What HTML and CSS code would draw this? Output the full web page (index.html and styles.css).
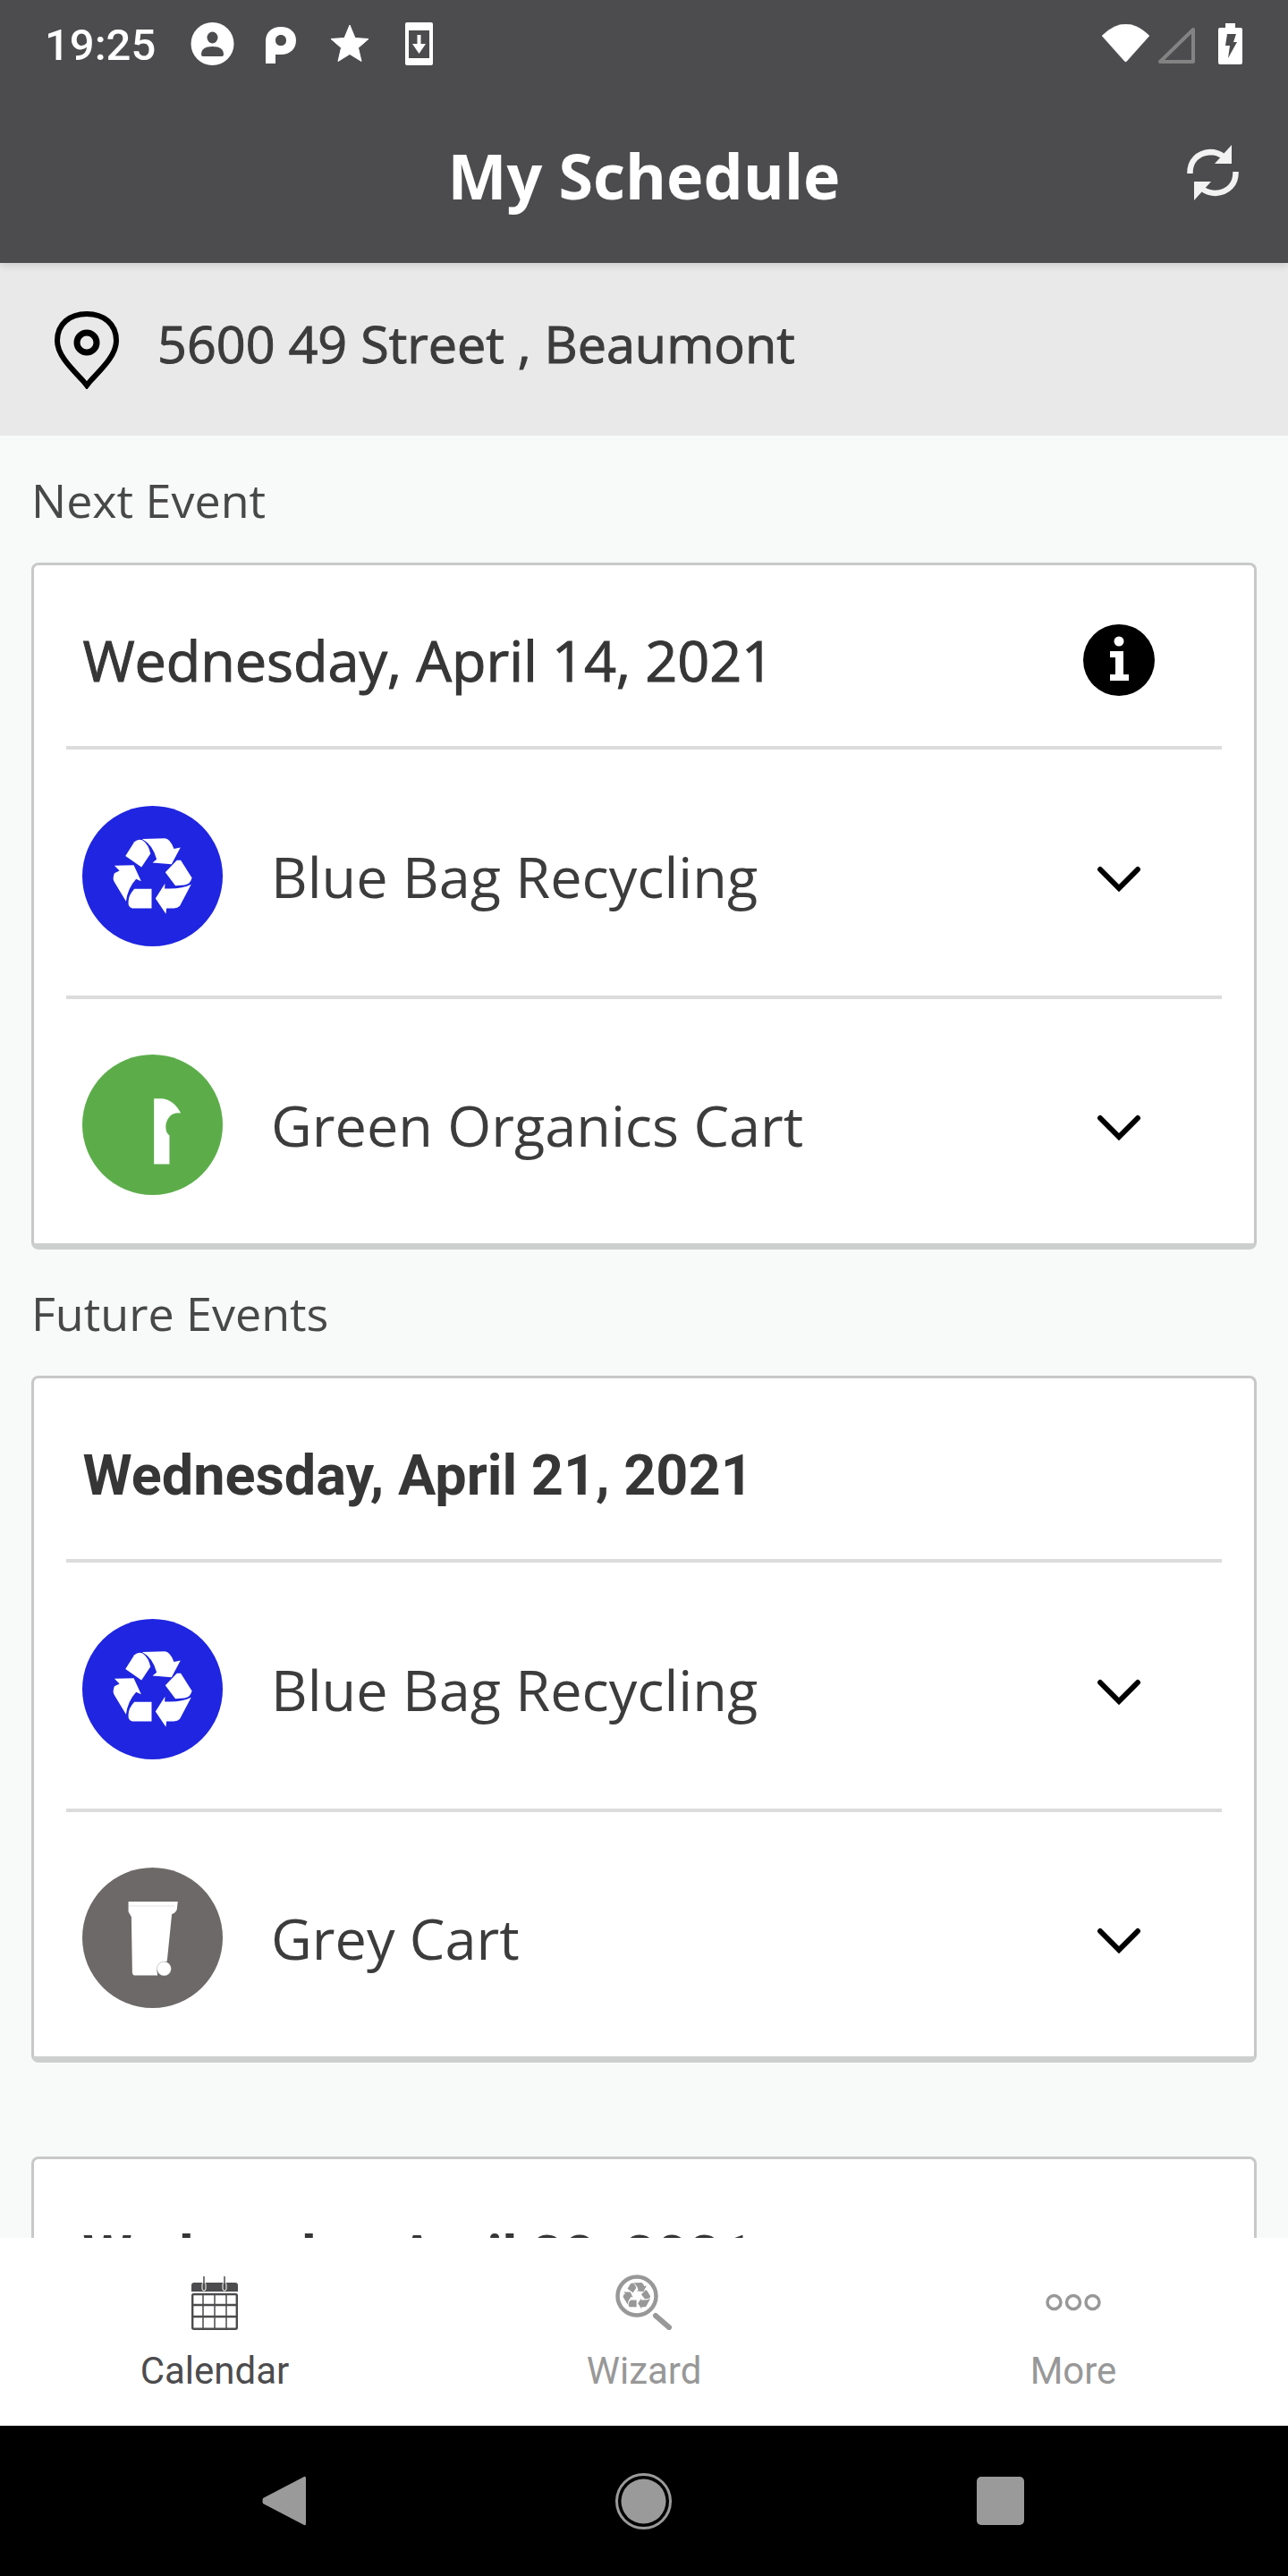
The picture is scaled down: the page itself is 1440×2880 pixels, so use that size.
FILE: index.html
```html
<!DOCTYPE html>
<html lang="en">
<head>
<meta charset="utf-8">
<title>My Schedule</title>
<link rel="stylesheet" href="styles.css">
</head>
<body>
<svg class="defs" width="0" height="0" aria-hidden="true">
  <symbol id="recycle" viewBox="0 0 660 660">
    <path d="M242 262L272 215Q285 203 300 210Q320 224 326 255L296 300Z"/>
    <path d="M298 205L375 203Q393 205 405 238L427 234L397 290L333 285L347 274Q335 225 298 205Z"/>
    <path d="M376 317L415 277L428 277L465 335Q463 355 440 360L410 362Z"/>
    <path d="M463 358L425 430Q418 438 405 438L380 438L378 457L343 405L375 355L374 372Q430 375 463 358Z"/>
    <path d="M330 373L330 438L265 438Q250 435 252 415Q252 395 272 373Z"/>
    <path d="M205 295L270 293L295 347L278 340Q250 370 244 415L205 350Q197 340 205 320L222 312Z"/>
  </symbol>
  <symbol id="chevron" viewBox="0 0 50 30">
    <path d="M4 4L25 25L46 4" fill="none" stroke="#000" stroke-width="6" stroke-linecap="round" stroke-linejoin="miter"/>
  </symbol>
</svg>
<div class="app">
  <header class="top">
    <div class="status">
      <span class="time">19:25</span>
      <svg class="st st-avatar" viewBox="0 0 49 48"><circle cx="24.5" cy="24" r="24" fill="#fff"/><ellipse cx="24.5" cy="17" rx="6" ry="6.5" fill="#4c4c4e"/><path d="M12 36Q12 27 24.5 27Q37 27 37 36Q37 38 35 38H14Q12 38 12 36Z" fill="#4c4c4e"/></svg>
      <svg class="st st-p" viewBox="0 0 34 41"><path fill-rule="evenodd" d="M0 41V16C0 6 7 0 17 0C27 0 34 6 34 15C34 25 27 31 17 31H11V41ZM11 15C11 19 13.500 21 17 21C20.500 21 23 19 23 15C23 11.500 20.500 9 17 9C13.500 9 11 11.500 11 15Z" fill="#fff"/></svg>
      <svg class="st st-star" viewBox="0 0 42 41"><path d="M21 0L27 14.500L42 15.500L30.500 25.500L34 40.500L21 32.500L8 40.500L11.500 25.500L0 15.500L15 14.500Z" fill="#fff" stroke="#fff" stroke-width="1" stroke-linejoin="round"/></svg>
      <svg class="st st-phone" viewBox="0 0 31 48"><path fill-rule="evenodd" d="M2 0H29Q31 0 31 2V46Q31 48 29 48H2Q0 48 0 46V2Q0 0 2 0ZM4 9V40H27V9Z" fill="#fff"/><path d="M13.500 14H17.500V24H23L15.500 35L8 24H13.500Z" fill="#fff"/></svg>
      <span class="status-gap"></span>
      <svg class="st st-wifi" viewBox="0 0 53 43"><path d="M0 13Q26.500 -13 53 13L28 41Q26.500 43 25 41Z" fill="#fff" stroke="#fff" stroke-width="0.500"/></svg>
      <svg class="st st-signal" viewBox="0 0 43 42"><path d="M40 4V40H3Z" fill="none" stroke="#838384" stroke-width="4" stroke-linejoin="round"/></svg>
      <svg class="st st-battery" viewBox="0 0 27 46"><path fill-rule="evenodd" d="M8 0H19V5H25Q27 5 27 7V44Q27 46 25 46H2Q0 46 0 44V7Q0 5 2 5H8Z" fill="#fff"/><path d="M10 12H20L17 21H21L11 39L13 25H8Z" fill="#4c4c4e"/></svg>
    </div>
    <div class="titlebar">
      <span></span>
      <h1 class="title">My Schedule</h1>
      <svg class="sync" viewBox="0 0 58 62"><g fill="none" stroke="#f2f2f2" stroke-width="6.500"><path d="M3.500 32C3 18 12 9 26 8C32 8 37 10 41 13"/><path d="M54.500 30C55 44 46 53 32 54C26 54 21 52 17 49"/></g><path d="M50 0V21H31Z" fill="#f2f2f2"/><path d="M8 62V41H27Z" fill="#f2f2f2"/></svg>
    </div>
  </header>

  <div class="address">
    <svg class="pin" viewBox="0 0 74 88"><path d="M37 84L33 79C20 65 4 50 4 34C4 15 18 4 37 4C56 4 70 15 70 34C70 50 54 65 41 79Z" fill="none" stroke="#000" stroke-width="6"/><circle cx="37" cy="36" r="11" fill="none" stroke="#000" stroke-width="7"/></svg>
    <span class="address-text">5600 49 Street , Beaumont</span>
  </div>

  <main class="content">
    <h2 class="section first">Next Event</h2>
    <section class="card">
      <div class="card-head">
        <span class="date date-next">Wednesday, April 14, 2021</span>
        <svg class="info" viewBox="0 0 80 80"><circle cx="40" cy="40" r="40" fill="#000"/><circle cx="40" cy="19" r="5.500" fill="#fff"/><path d="M30 30H45V56H51V63H30V56H36V37H30Z" fill="#fff"/></svg>
      </div>
      <div class="row">
        <svg class="badge blue" viewBox="97 94 472 472"><circle cx="333" cy="330" r="236"/><use href="#recycle" x="0" y="0" width="660" height="660"/></svg>
        <span class="row-label">Blue Bag Recycling</span>
        <svg class="chev"><use href="#chevron"/></svg>
      </div>
      <div class="row">
        <svg class="badge green" viewBox="97 88 472 472"><circle cx="333" cy="324" r="236"/><path class="glyph" d="M338 236L365 236Q405 240 428 285Q405 282 392 295Q375 315 378 335Q378 350 390 360L390 456L338 456Z"/></svg>
        <span class="row-label">Green Organics Cart</span>
        <svg class="chev"><use href="#chevron"/></svg>
      </div>
    </section>

    <h2 class="section">Future Events</h2>
    <section class="card">
      <div class="card-head">
        <span class="date date-bold">Wednesday, April 21, 2021</span>
      </div>
      <div class="row">
        <svg class="badge blue" viewBox="97 94 472 472"><circle cx="333" cy="330" r="236"/><use href="#recycle" x="0" y="0" width="660" height="660"/></svg>
        <span class="row-label">Blue Bag Recycling</span>
        <svg class="chev"><use href="#chevron"/></svg>
      </div>
      <div class="row">
        <svg class="badge grey" viewBox="97 84 472 472"><circle cx="333" cy="320" r="236"/><path class="glyph" d="M252 198L418 198L415 225Q408 238 398 240L382 398Q350 405 348 430L350 446L272 446Q265 445 265 435L262 250L252 232Z"/><path d="M254 213H408" stroke="#d8d8d8" stroke-width="2"/><circle class="glyph wheel" cx="372" cy="424" r="24"/></svg>
        <span class="row-label">Grey Cart</span>
        <svg class="chev"><use href="#chevron"/></svg>
      </div>
    </section>

    <section class="card card-last">
      <div class="card-head">
        <span class="date date-bold">Wednesday, April 28, 2021</span>
      </div>
    </section>
  </main>

  <nav class="tabs">
    <div class="tab active">
      <svg class="tab-icon" viewBox="0 0 52 60"><path d="M0 10Q0 7 3 7H49Q52 7 52 10V17H0Z" fill="#4c4c4e"/><g fill="none" stroke="#fff" stroke-width="1"><rect x="12" y="7" width="4" height="9" rx="2"/><rect x="35" y="7" width="4" height="9" rx="2"/></g><path d="M14 0V12M37 0V12" stroke="#4c4c4e" stroke-width="1.500"/><rect x="1.200" y="20" width="49.600" height="38.800" rx="1.500" fill="#fff" stroke="#4c4c4e" stroke-width="2.400"/><path d="M13 20V58M26 20V58M39 20V58" stroke="#4c4c4e" stroke-width="1.500"/><path d="M0 32H52M0 45H52" stroke="#4c4c4e" stroke-width="2.500"/></svg>
      <span class="tab-label">Calendar</span>
    </div>
    <div class="tab">
      <svg class="tab-icon wizard" viewBox="0 0 64 62"><circle cx="24" cy="24" r="21.500" fill="none" stroke="#989898" stroke-width="4.500"/><svg x="4" y="4" width="40" height="40" viewBox="160 160 346 346" fill="#989898"><use href="#recycle" width="660" height="660"/></svg><path d="M45 46L60 59" stroke="#989898" stroke-width="6" stroke-linecap="round"/></svg>
      <span class="tab-label">Wizard</span>
    </div>
    <div class="tab">
      <svg class="tab-icon more" viewBox="0 0 62 62"><g fill="none" stroke="#989898" stroke-width="3.500"><circle cx="9.500" cy="31" r="7.500"/><circle cx="31" cy="31" r="7.500"/><circle cx="52.500" cy="31" r="7.500"/></g></svg>
      <span class="tab-label">More</span>
    </div>
  </nav>

  <footer class="sysbar">
    <svg class="sys-back" viewBox="0 0 49 56"><path d="M47 1Q49 0 49 3V53Q49 56 47 55L1 31Q0 28 1 25Z" fill="#9a9a9a"/></svg>
    <svg class="sys-home" viewBox="0 0 63 63"><circle cx="31.500" cy="31.500" r="30" fill="none" stroke="#9a9a9a" stroke-width="3"/><circle cx="31.500" cy="31.500" r="25" fill="#9a9a9a"/></svg>
    <span class="sys-recent"></span>
  </footer>
</div>
</body>
</html>
```

FILE: styles.css
```css
* { box-sizing: border-box; }
html, body { margin: 0; padding: 0; }
body { width: 1440px; height: 2880px; overflow: hidden; font-family: "Open Sans", "Liberation Sans", sans-serif; color: #3a3a3a; }
.defs { position: absolute; }

.app { width: 1440px; height: 2880px; display: flex; flex-direction: column; background: #f8f9f9; }

.top { height: 294px; flex: none; background: #4c4c4e; position: relative; z-index: 2; box-shadow: 0 3px 8px rgba(0,0,0,.12); }
.status { height: 98px; display: flex; align-items: flex-start; padding-left: 50px; }
.time { font-family: Roboto, sans-serif; font-size: 49px; font-weight: 500; line-height: 49px; color: #fff; margin-top: 26px; width: 163px; flex: none; }
.st { flex: none; display: block; }
.st-avatar { width: 49px; height: 48px; margin-top: 25px; }
.st-p { width: 34px; height: 41px; margin-top: 30px; margin-left: 35px; }
.st-star { width: 42px; height: 41px; margin-top: 28px; margin-left: 39px; }
.st-phone { width: 31px; height: 48px; margin-top: 25px; margin-left: 41px; }
.status-gap { flex: 1; }
.st-wifi { width: 53px; height: 43px; margin-top: 27px; }
.st-signal { width: 43px; height: 42px; margin-top: 29px; margin-left: 9px; }
.st-battery { width: 27px; height: 46px; margin-top: 26px; margin-left: 25px; margin-right: 51px; }

.titlebar { height: 196px; display: grid; grid-template-columns: 1fr auto 1fr; align-items: center; }
.title { margin: 0; font-size: 70px; font-weight: 700; line-height: 96px; color: #fff; }
.sync { width: 58px; height: 62px; justify-self: end; margin-right: 55px; margin-bottom: 6px; filter: blur(.7px); }

.address { height: 193px; flex: none; background: #e9e9e9; display: flex; align-items: center; padding-left: 60px; }
.address-text { font-size: 57.500px; color: #3c3c3c; -webkit-text-stroke: 1px #3c3c3c; margin-bottom: 13px; }
.pin { width: 74px; height: 88px; margin-right: 42px; flex: none; }

.content { flex: 1; min-height: 0; overflow: hidden; }
.section { margin: 0; height: 141px; padding-left: 35px; font-size: 52px; font-weight: 400; line-height: 72px; padding-top: 35px; color: #484848; }
.section.first { height: 142px; padding-top: 36px; }

.card { margin: 0 35px; background: #fff; border: 3px solid #c8c8c8; border-bottom: 7px solid #cdcfce; border-radius: 8px; }
.card-last { margin-top: 105px; height: 300px; }
.card-head { height: 202px; display: flex; align-items: center; justify-content: space-between; padding: 10px 111px 0 54.500px; }
.date { color: #363636; line-height: 80px; }
.date-next { font-size: 63px; letter-spacing: -.1px; -webkit-text-stroke: 1px #363636; }
.date-bold { font-family: Roboto, sans-serif; font-size: 63px; font-weight: 700; margin-top: 6px; }
.info { width: 80px; height: 80px; flex: none; }

.row { height: 279px; margin: 0 36px; border-top: 4px solid #dcdcdc; display: flex; align-items: center; padding: 9px 0 0 18px; }
.row:last-child { height: 277px; }
.badge { width: 157px; height: 157px; flex: none; fill: #fff; margin-top: -1px; }
.badge.blue circle { fill: #1f25e0; }
.badge.green circle { fill: #5cad4a; }
.badge.grey > circle:first-child { fill: #6d6968; }
.glyph { fill: #fff; }
.wheel { stroke: #6d6968; stroke-width: 1; }
.row-label { margin-left: 54px; font-size: 63px; line-height: 86px; color: #3c3c3c; }
.chev { width: 50px; height: 30px; margin: 5px 90px 0 auto; flex: none; }

.tabs { height: 210px; flex: none; background: #fff; display: grid; grid-template-columns: repeat(3, 480px); }
.tab { display: flex; flex-direction: column; align-items: center; color: #989898; }
.tab.active { color: #4c4c4e; }
.tab-icon { width: 52px; height: 60px; margin-top: 43px; flex: none; }
.tab-icon.wizard { width: 64px; height: 62px; margin-top: 41px; }
.tab-icon.more { width: 62px; height: 62px; margin-top: 41px; }
.tab-label { font-family: Roboto, sans-serif; font-size: 42px; line-height: 48px; margin-top: 22px; }

.sysbar { height: 168px; flex: none; background: #000; display: flex; align-items: center; padding-left: 293px; }
.sys-back { width: 49px; height: 56px; flex: none; }
.sys-home { width: 63px; height: 63px; flex: none; margin-left: 346px; }
.sys-recent { width: 53px; height: 54px; background: #9a9a9a; border-radius: 5px; margin-left: 341px; flex: none; }
```
